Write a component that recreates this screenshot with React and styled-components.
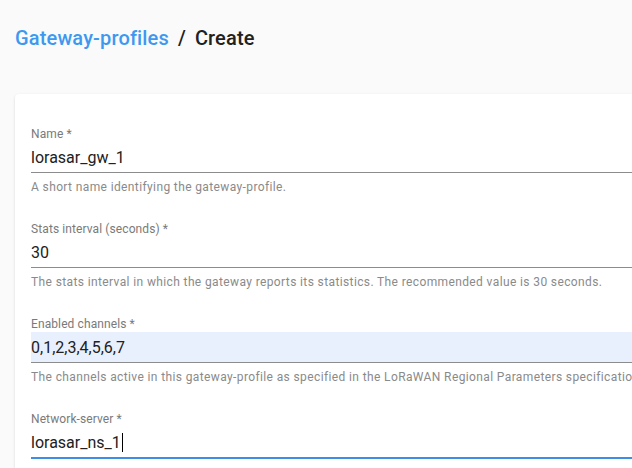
import React from "react";
import styled, { createGlobalStyle } from "styled-components";

const Global = createGlobalStyle`
  html, body { margin: 0; padding: 0; background: #fafafa; }
  body { font-family: Roboto, "Liberation Sans", sans-serif; overflow: hidden; }
  * { box-sizing: border-box; }
`;

const Page = styled.div`
  width: 632px;
  height: 468px;
  overflow: hidden;
  padding: 24px 0 0 15px;
`;

const Breadcrumbs = styled.div`
  display: flex;
  align-items: center;
  gap: 9px;
  font-size: 20px;
  font-weight: 500;
  line-height: 28px;
  letter-spacing: 0.15px;
  color: #212121;
  height: 28px;
`;

const Crumb = styled.span`
  color: ${(p) => (p.$link ? "#3d98f0" : "#212121")};
`;

const Card = styled.div`
  margin-top: 42px;
  width: 640px;
  background: #fff;
  border-radius: 4px;
  box-shadow: 0 1px 3px rgba(0, 0, 0, 0.12), 0 1px 1px rgba(0, 0, 0, 0.06);
  padding: 32px 0 40px 16px;
  display: flex;
  flex-direction: column;
  gap: 28px;
`;

const Field = styled.div`
  display: flex;
  flex-direction: column;
`;

const Label = styled.label`
  font-size: 12px;
  line-height: 16px;
  color: #7a7a7a;
  letter-spacing: 0.1px;
`;

const InputBox = styled.div`
  height: ${(p) => (p.$focused ? "32px" : "31px")};
  display: flex;
  align-items: center;
  padding-top: 1px;
  font-size: 16px;
  color: #212121;
  background: ${(p) => (p.$filled ? "#e8f0fe" : "transparent")};
  border-bottom: ${(p) =>
    p.$focused ? "2px solid #3d8fe6" : "1px solid #8c8c8c"};
`;

const Caret = styled.span`
  display: inline-block;
  width: 1px;
  height: 19px;
  background: #000;
  margin-left: 1px;
`;

const Helper = styled.div`
  margin-top: 8px;
  font-size: 12px;
  line-height: 12px;
  color: #8a8a8a;
  letter-spacing: 0.38px;
  white-space: nowrap;
`;

const fields = [
  {
    label: "Name *",
    value: "lorasar_gw_1",
    helper: "A short name identifying the gateway-profile.",
  },
  {
    label: "Stats interval (seconds) *",
    value: "30",
    helper:
      "The stats interval in which the gateway reports its statistics. The recommended value is 30 seconds.",
  },
  {
    label: "Enabled channels *",
    value: "0,1,2,3,4,5,6,7",
    filled: true,
    helper:
      "The channels active in this gateway-profile as specified in the LoRaWAN Regional Parameters specification.",
  },
  {
    label: "Network-server *",
    value: "lorasar_ns_1",
    focused: true,
  },
];

export default function App() {
  return (
    <>
      <Global />
      <Page>
        <Breadcrumbs>
          <Crumb $link>Gateway-profiles</Crumb>
          <span>/</span>
          <Crumb>Create</Crumb>
        </Breadcrumbs>
        <Card>
          {fields.map((f) => (
            <Field key={f.label}>
              <Label>{f.label}</Label>
              <InputBox $filled={f.filled} $focused={f.focused}>
                {f.value}
                {f.focused && <Caret />}
              </InputBox>
              {f.helper && <Helper>{f.helper}</Helper>}
            </Field>
          ))}
        </Card>
      </Page>
    </>
  );
}
